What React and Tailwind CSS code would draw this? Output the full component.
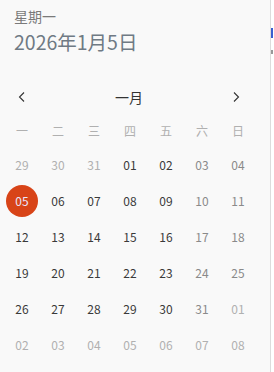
const WEEKDAYS = ["一", "二", "三", "四", "五", "六", "日"];

// each cell: [label, kind]  kind: o = other month, w = weekend, d = weekday, s = selected
const DAYS = [
  ["29", "o"], ["30", "o"], ["31", "o"], ["01", "d"], ["02", "d"], ["03", "w"], ["04", "w"],
  ["05", "s"], ["06", "d"], ["07", "d"], ["08", "d"], ["09", "d"], ["10", "w"], ["11", "w"],
  ["12", "d"], ["13", "d"], ["14", "d"], ["15", "d"], ["16", "d"], ["17", "w"], ["18", "w"],
  ["19", "d"], ["20", "d"], ["21", "d"], ["22", "d"], ["23", "d"], ["24", "w"], ["25", "w"],
  ["26", "d"], ["27", "d"], ["28", "d"], ["29", "d"], ["30", "d"], ["31", "w"], ["01", "o"],
  ["02", "o"], ["03", "o"], ["04", "o"], ["05", "o"], ["06", "o"], ["07", "o"], ["08", "o"],
];

const Chevron = ({ dir }) => (
  <svg width="12" height="12" viewBox="0 0 12 12" fill="none">
    <path
      d={dir === "left" ? "M8 1.5L3.5 6L8 10.5" : "M4 1.5L8.5 6L4 10.5"}
      stroke="#333"
      strokeWidth="1.1"
    />
  </svg>
);

const App = () => {
  return (
    <div
      className="flex h-[372px] w-[274px] bg-white"
      style={{ fontFamily: '"Noto Sans CJK SC", "Noto Sans", sans-serif' }}
    >
      {/* Calendar panel */}
      <div className="flex h-full w-[271px] flex-col border-r border-[#dcdcdc] bg-[#f9f9f9]">
        {/* Date heading */}
        <div className="h-[79px] px-[14px] pt-[6px]">
          <p className="text-[14px] leading-[20px] text-[#7a7a7a]">星期一</p>
          <p className="mt-[2px] text-[19.5px] leading-[28px] text-[#6f7a84]">
            2026年1月5日
          </p>
        </div>

        {/* Month nav */}
        <div className="flex h-[36px] items-center justify-between pl-[16px] pr-[28px]">
          <Chevron dir="left" />
          <span className="text-[14px] text-[#333]">一月</span>
          <Chevron dir="right" />
        </div>

        {/* Weekday labels */}
        <div className="ml-[4px] grid h-[32px] w-[252px] grid-cols-7 items-center">
          {WEEKDAYS.map((d) => (
            <span key={d} className="text-center text-[12px] text-[#b0b0b0]">
              {d}
            </span>
          ))}
        </div>

        {/* Days */}
        <div className="ml-[4px] grid w-[252px] grid-cols-7">
          {DAYS.map(([label, kind], i) => (
            <div key={i} className="flex h-[36px] items-center justify-center">
              {kind === "s" ? (
                <span className="flex size-[32px] items-center justify-center rounded-full bg-[#d84418] text-[12px] text-[#e8e8ff]">
                  {label}
                </span>
              ) : (
                <span
                  className={`text-[12px] ${
                    kind === "o"
                      ? "text-[#b0b0b0]"
                      : kind === "w"
                        ? "text-[#8a8a8a]"
                        : "text-[#3a3a3a]"
                  }`}
                >
                  {label}
                </span>
              )}
            </div>
          ))}
        </div>
      </div>

      {/* Sliver of the window behind */}
      <div className="flex w-[2px] flex-col bg-white">
        <div className="mt-[28px] h-[10px] bg-[#3a5fd0]" />
        <div className="mt-[12px] h-[4px] bg-[#999]" />
      </div>
    </div>
  );
};

export default App;
